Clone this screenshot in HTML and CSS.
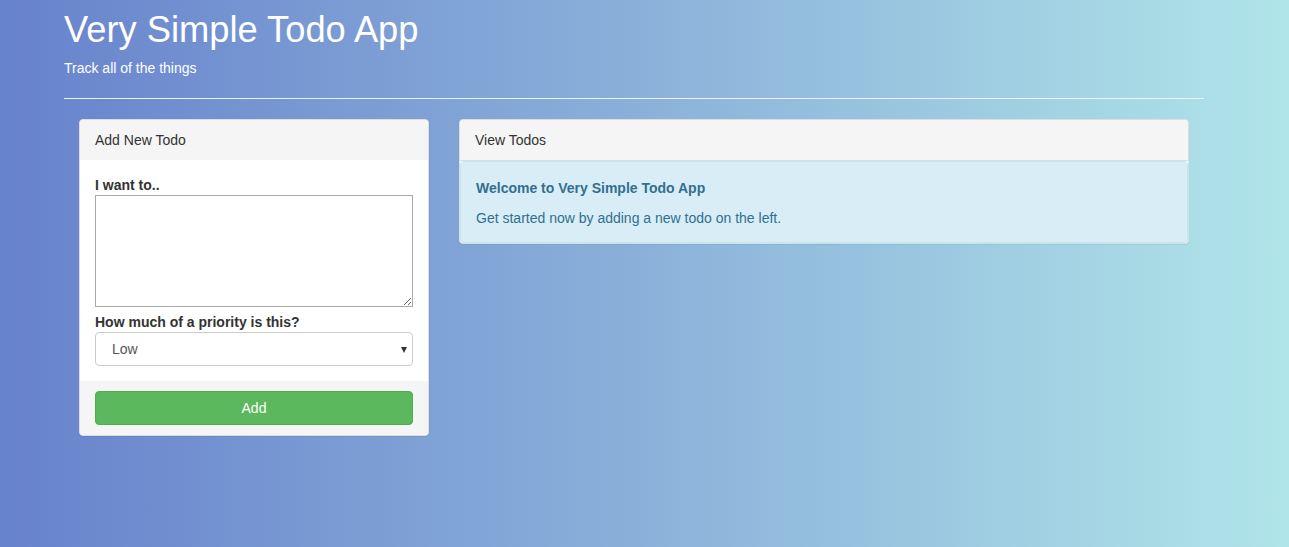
FILE: index.html
```html
<!DOCTYPE html>
<html lang="en">
<head>
<meta charset="utf-8">
<title>Very Simple Todo App</title>
<link rel="stylesheet" href="styles.css">
</head>
<body>
<div class="container">
  <header class="page-header">
    <h1 class="title">Very Simple Todo App</h1>
    <p class="subtitle">Track all of the things</p>
  </header>
  <div class="row">
    <div class="col-left">
      <div class="panel">
        <div class="panel-heading">Add New Todo</div>
        <div class="panel-body">
          <label class="field-label">I want to..</label>
          <textarea class="todo-text"></textarea>
          <label class="field-label field-label-gap">How much of a priority is this?</label>
          <div class="select-wrap">
            <select class="priority">
              <option>Low</option>
              <option>Medium</option>
              <option>High</option>
            </select>
            <span class="caret"></span>
          </div>
        </div>
        <div class="panel-footer">
          <button class="btn-add" type="button">Add</button>
        </div>
      </div>
    </div>
    <div class="col-right">
      <div class="panel">
        <div class="panel-heading panel-heading-bordered">View Todos</div>
        <div class="alert">
          <div class="alert-title">Welcome to Very Simple Todo App</div>
          <p class="alert-text">Get started now by adding a new todo on the left.</p>
        </div>
      </div>
    </div>
  </div>
</div>
</body>
</html>
```

FILE: styles.css
```css
html, body {
  margin: 0;
  padding: 0;
  height: 100%;
}

body {
  font-family: "Liberation Sans", Arial, Helvetica, sans-serif;
  font-size: 14px;
  line-height: 20px;
  color: #333;
  background: linear-gradient(to right, #6782cc 0%, #8bb1da 50%, #b0e5e9 100%);
  min-height: 547px;
}

.container {
  margin-left: 64px;
  width: 1140px;
}

.page-header {
  border-bottom: 1px solid #eef2f8;
  padding-bottom: 20px;
}

.title {
  margin: 0;
  padding-top: 10px;
  font-size: 36.3px;
  line-height: 40px;
  font-weight: 400;
  color: #fff;
}

.subtitle {
  margin: 8px 0 0;
  color: #fff;
  font-size: 14px;
  line-height: 20px;
}

.row {
  display: flex;
  margin-top: 20px;
}

.col-left {
  width: 380px;
  padding: 0 15px;
  box-sizing: border-box;
}

.col-right {
  width: 760px;
  padding: 0 15px;
  box-sizing: border-box;
}

.panel {
  background: #fff;
  border: 1px solid #ddd;
  border-radius: 4px;
  box-shadow: 0 1px 1px rgba(0, 0, 0, 0.05);
  overflow: hidden;
}

.panel-heading {
  background: #f5f5f5;
  padding: 10px 15px;
  line-height: 20px;
  color: #333;
}

.panel-heading-bordered {
  border-bottom: 1px solid #ddd;
  padding-bottom: 10px;
}

.panel-body {
  padding: 16px 15px 15px;
  display: flex;
  flex-direction: column;
}

.field-label {
  display: block;
  font-weight: 700;
  line-height: 19px;
}

.field-label-gap {
  margin-top: 5px;
  line-height: 20px;
}

.todo-text {
  display: block;
  box-sizing: border-box;
  width: 318px;
  height: 112px;
  border: 1px solid #a9a9a9;
  margin: 0;
  padding: 2px;
  font-family: inherit;
  resize: vertical;
}

.select-wrap {
  position: relative;
}

.priority {
  display: block;
  width: 100%;
  height: 34px;
  box-sizing: border-box;
  padding: 6px 16px;
  font-family: inherit;
  font-size: 14px;
  color: #555;
  background: #fff;
  border: 1px solid #ccc;
  border-radius: 4px;
  -webkit-appearance: none;
  appearance: none;
}

.caret {
  position: absolute;
  right: 6px;
  top: 15px;
  width: 0;
  height: 0;
  border-left: 3.5px solid transparent;
  border-right: 3.5px solid transparent;
  border-top: 6px solid #333;
  pointer-events: none;
}

.panel-footer {
  background: #f5f5f5;
  padding: 10px 15px;
}

.btn-add {
  display: block;
  width: 100%;
  height: 34px;
  background: #5cb85c;
  border: 1px solid #4cae4c;
  border-radius: 4px;
  color: #fff;
  font-family: inherit;
  font-size: 14px;
}

.alert {
  background: #d9edf7;
  border: 1px solid #bce8f1;
  border-radius: 4px;
  color: #31708f;
  padding: 15px 15px 14px;
}

.alert-title {
  font-weight: 700;
  line-height: 20px;
  margin-top: 1px;
}

.alert-text {
  margin: 10px 0 0;
  line-height: 20px;
}
```
